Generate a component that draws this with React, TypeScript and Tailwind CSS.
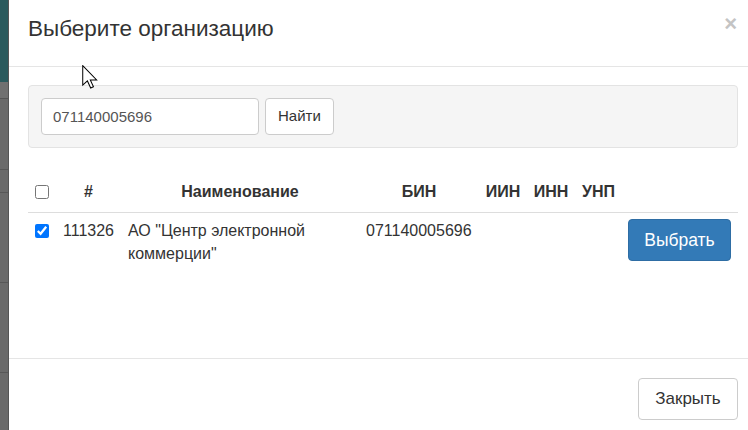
import React from "react";

const font = { fontFamily: '"Liberation Sans", Arial, sans-serif' };

const Cursor: React.FC = () => (
  <svg
    className="absolute left-[82px] top-[65px] pointer-events-none"
    width="16"
    height="24"
    viewBox="0 0 12.5 19"
  >
    <path
      d="M0.5 0.5 L0.5 16 L4.2 12.6 L6.8 18.2 L9 17.2 L6.5 11.8 L11.5 11.8 Z"
      fill="#fff"
      stroke="#000"
      strokeWidth="0.8"
      strokeLinejoin="miter"
    />
  </svg>
);

export default function App() {
  return (
    <div
      className="relative w-[748px] h-[430px] flex overflow-hidden bg-white text-[#333]"
      style={font}
    >
      {/* backdrop strip */}
      <div className="w-[9px] h-full flex flex-col bg-[#6a6a6a] border-r border-[#555]">
        <div className="h-[82px] bg-[#2b5a5d]" />
        <div className="h-[17px] bg-[#707070] border-b border-[#555]" />
        <div className="h-[71px] border-b border-[#575757]" />
        <div className="h-[23px] border-b border-[#575757]" />
        <div className="h-[90px] border-b border-[#575757]" />
        <div className="h-[90px] border-b border-[#575757]" />
      </div>

      {/* modal */}
      <div className="flex-1 h-full flex flex-col bg-white">
        <div className="h-[67px] shrink-0 flex justify-between border-b border-[#e5e5e5] pl-[19px] pr-[11px]">
          <h4 className="pt-[16px] text-[22.5px] leading-[26px] font-normal text-[#333]">
            Выберите организацию
          </h4>
          <button className="pt-[13px] self-start text-[22px] leading-[22px] font-bold text-[#c4c4c4]">
            ×
          </button>
        </div>

        <div className="flex-1 pt-[18px] pl-[19px] pr-[10px]">
          <div className="flex gap-[6px] p-[12px] bg-[#f5f5f5] border border-[#e3e3e3] rounded-[4px]">
            <input
              defaultValue="071140005696"
              className="w-[218px] h-[37px] px-[11px] text-[15px] text-[#555] bg-white border border-[#ccc] rounded-[4px] outline-none"
              style={font}
            />
            <button className="h-[37px] px-[12px] text-[15px] text-[#333] bg-white border border-[#ccc] rounded-[4px]">
              Найти
            </button>
          </div>

          <table className="mt-[22px] w-[710px] table-fixed border-collapse text-[16px] leading-[23px]">
            <colgroup>
              <col className="w-[28px]" />
              <col className="w-[65px]" />
              <col className="w-[238px]" />
              <col className="w-[120px]" />
              <col className="w-[48px]" />
              <col className="w-[48px]" />
              <col className="w-[47px]" />
              <col className="w-[116px]" />
            </colgroup>
            <thead>
              <tr className="border-b border-[#ddd]">
                <th className="pl-[7px] pt-[10px] pb-[9px] align-middle">
                  <div className="flex items-center h-[23px]">
                    <input type="checkbox" className="w-[14px] h-[14px] m-0" />
                  </div>
                </th>
                <th className="px-[7px] pt-[10px] pb-[9px] text-center font-bold">#</th>
                <th className="px-[7px] pt-[10px] pb-[9px] text-center font-bold">Наименование</th>
                <th className="px-[7px] pt-[10px] pb-[9px] text-center font-bold">БИН</th>
                <th className="pt-[10px] pb-[9px] text-center font-bold">ИИН</th>
                <th className="pt-[10px] pb-[9px] text-center font-bold">ИНН</th>
                <th className="pt-[10px] pb-[9px] text-center font-bold">УНП</th>
                <th />
              </tr>
            </thead>
            <tbody>
              <tr>
                <td className="pl-[7px] py-[6px] align-top">
                  <div className="flex items-center h-[23px]">
                    <input type="checkbox" defaultChecked className="w-[14px] h-[14px] m-0" />
                  </div>
                </td>
                <td className="px-[7px] py-[6px] align-top">111326</td>
                <td className="px-[7px] py-[6px] align-top">АО "Центр электронной коммерции"</td>
                <td className="px-[7px] py-[6px] align-top">071140005696</td>
                <td />
                <td />
                <td />
                <td className="pr-[7px] py-[6px] align-top text-right">
                  <button className="h-[42px] w-[103px] text-[17.5px] text-white bg-[#337ab7] border border-[#2e6da4] rounded-[4px]">
                    Выбрать
                  </button>
                </td>
              </tr>
            </tbody>
          </table>
        </div>

        <div className="h-[72px] shrink-0 flex justify-end items-start border-t border-[#e5e5e5] pt-[19px] pr-[10px]">
          <button className="h-[42px] w-[100px] text-[17px] text-[#333] bg-white border border-[#ccc] rounded-[4px]">
            Закрыть
          </button>
        </div>
      </div>

      <Cursor />
    </div>
  );
}
